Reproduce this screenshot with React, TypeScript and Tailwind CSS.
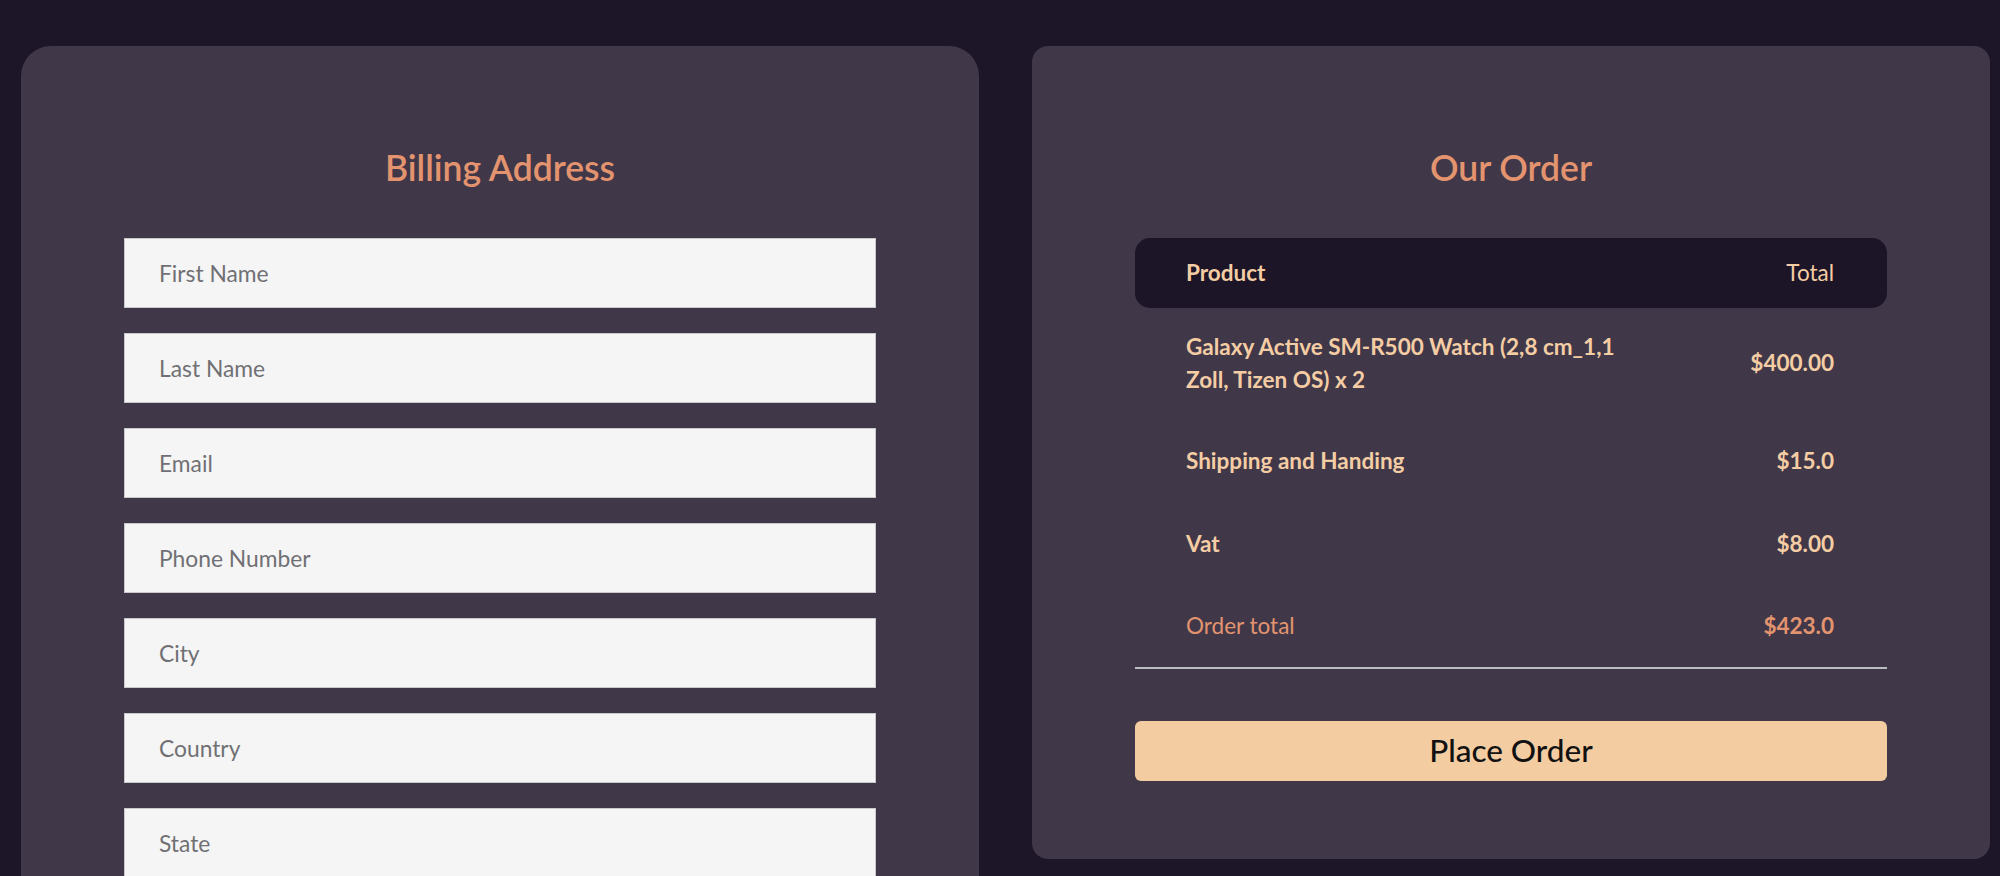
import React from "react";

const fields = ["First Name", "Last Name", "Email", "Phone Number", "City", "Country", "State", "Zip Code"];

export default function App() {
  return (
    <div
      className="min-h-screen bg-[#1c1628] pt-[46px] pl-[21px] pr-[10px] pb-[40px]"
      style={{ fontFamily: "Lato, 'Open Sans', sans-serif" }}
    >
      <div className="grid grid-cols-2 gap-[53px] items-start">
        {/* Billing */}
        <div className="bg-[#403849] rounded-[30px] px-[103px] pt-[101px] pb-[77px]">
          <h2 className="text-center text-[35.5px] leading-[41px] font-semibold text-[#e3946f]">Billing Address</h2>
          <div className="mt-[50px] flex flex-col gap-[25px]">
            {fields.map((f) => (
              <input
                key={f}
                placeholder={f}
                className="h-[70px] w-full bg-[#f5f5f5] border border-[#c9c9cc] px-[34px] text-[22.8px] text-[#333] placeholder:text-[#707074] outline-none"
                style={{ fontFamily: "Lato, sans-serif" }}
              />
            ))}
          </div>
        </div>

        {/* Order */}
        <div className="bg-[#403849] rounded-[16px] px-[103px] pt-[101px] pb-[78px]">
          <h2 className="text-center text-[35.5px] leading-[41px] font-semibold text-[#e3946f]">Our Order</h2>
          <div className="mt-[50px]">
            <div className="h-[70px] bg-[#1c1528] rounded-[15px] flex items-center justify-between pl-[51px] pr-[53px] text-[22.5px] text-[#f5cda4]">
              <span className="font-bold">Product</span>
              <span className="font-normal">Total</span>
            </div>
            <div className="flex items-center justify-between pl-[51px] pr-[53px] py-[22px] text-[22.5px] text-[#f5cda4] font-bold">
              <span className="max-w-[450px] leading-[33px]">Galaxy Active SM-R500 Watch (2,8 cm_1,1 Zoll, Tizen OS) x 2</span>
              <span>$400.00</span>
            </div>
            <div className="h-[85px] flex items-center justify-between pl-[51px] pr-[53px] text-[22.5px] text-[#f5cda4] font-bold">
              <span>Shipping and Handing</span>
              <span>$15.0</span>
            </div>
            <div className="h-[82px] flex items-center justify-between pl-[51px] pr-[53px] text-[22.5px] text-[#f5cda4] font-bold">
              <span>Vat</span>
              <span>$8.00</span>
            </div>
            <div className="h-[84px] flex items-center justify-between pl-[51px] pr-[53px] text-[22.5px] text-[#e3946f] border-b-2 border-[#bdbcc2]">
              <span className="font-normal">Order total</span>
              <span className="font-bold">$423.0</span>
            </div>
            <button className="mt-[52px] h-[60px] w-full bg-[#f4cca2] rounded-[6px] text-[31.5px] text-[#111] font-medium">
              Place Order
            </button>
          </div>
        </div>
      </div>
    </div>
  );
}
